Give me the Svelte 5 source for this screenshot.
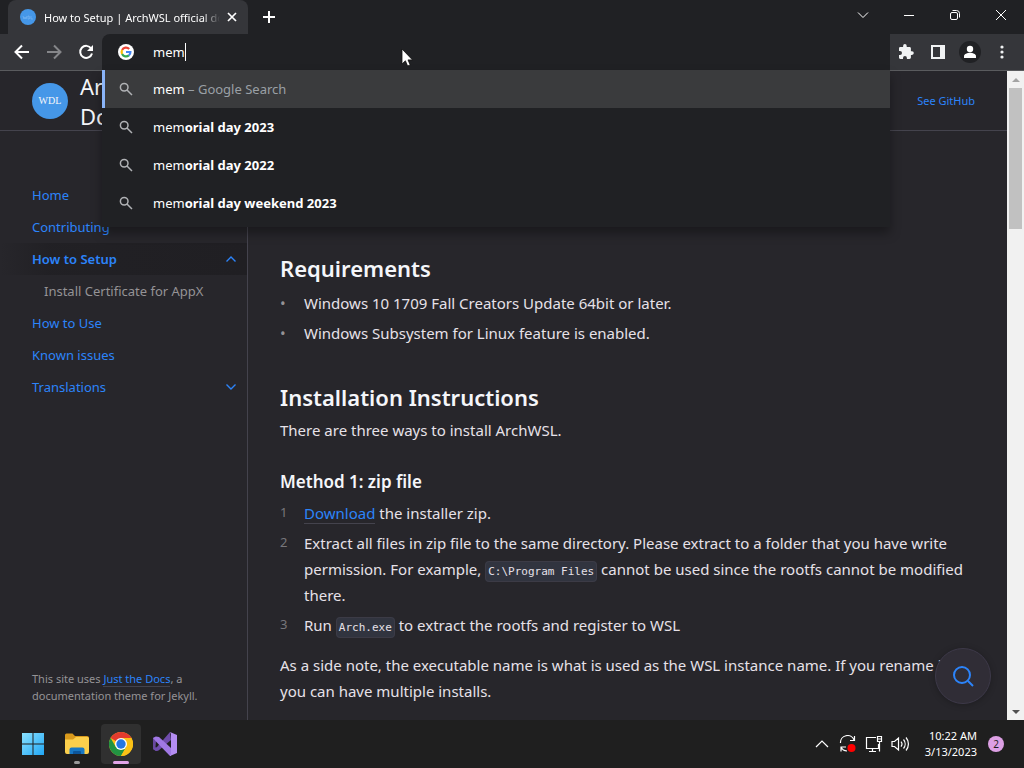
<script lang="ts">
	let query = 'mem';

	const suggestions = [
		{ typed: 'mem', rest: '', hint: ' – Google Search' },
		{ typed: 'mem', rest: 'orial day 2023', hint: '' },
		{ typed: 'mem', rest: 'orial day 2022', hint: '' },
		{ typed: 'mem', rest: 'orial day weekend 2023', hint: '' }
	];

	const nav = [
		{ name: 'Home' },
		{ name: 'Contributing' },
		{ name: 'How to Setup', active: true, children: ['Install Certificate for AppX'] },
		{ name: 'How to Use' },
		{ name: 'Known issues' },
		{ name: 'Translations', closed: true }
	];
</script>

<div class="desktop">
	<header class="titlebar">
		<div class="tab">
			<svg class="favicon" viewBox="0 0 16 16" aria-hidden="true">
				<circle cx="8" cy="8" r="8" fill="#4597e8" />
				<path d="M3 7l1 3 1-2 1 2 1-3M8 7v3h1l1-1-1-2zM11 7v3h2" fill="none" stroke="#80bbf5" stroke-width="0.6" />
			</svg>
			<span class="tab-title">How to Setup | ArchWSL official documentation</span>
			<button class="tab-close" aria-label="Close tab">
				<svg width="10" height="10" viewBox="0 0 10 10"><path d="M1 1l8 8M9 1l-8 8" stroke="#fff" stroke-width="1.7" /></svg>
			</button>
		</div>
		<button class="new-tab" aria-label="New tab">
			<svg width="14" height="14" viewBox="0 0 14 14"><path d="M7 1v12M1 7h12" stroke="#fff" stroke-width="2" /></svg>
		</button>
		<div class="window-buttons">
			<button aria-label="Search tabs">
				<svg width="12" height="12" viewBox="0 0 12 12"><path d="M1 3.5l5 5 5-5" /></svg>
			</button>
			<button aria-label="Minimize">
				<svg width="12" height="12" viewBox="0 0 12 12"><path d="M1 6.5h10" /></svg>
			</button>
			<button aria-label="Restore">
				<svg width="12" height="12" viewBox="0 0 12 12"><rect x="1.5" y="3.5" width="7" height="7" rx="1.5" /><path d="M3.5 1.5h4a3 3 0 0 1 3 3v4" /></svg>
			</button>
			<button aria-label="Close">
				<svg width="12" height="12" viewBox="0 0 12 12"><path d="M1 1l10 10M11 1L1 11" /></svg>
			</button>
		</div>
	</header>

	<div class="toolbar">
		<div class="history">
			<button aria-label="Back">
				<svg width="16" height="16" viewBox="0 0 16 16"><path d="M15 8H2M8 1.5L1.5 8 8 14.5" /></svg>
			</button>
			<button aria-label="Forward" disabled>
				<svg width="16" height="16" viewBox="0 0 16 16"><path d="M1 8h13M8 1.5L14.5 8 8 14.5" /></svg>
			</button>
			<button aria-label="Reload">
				<svg width="16" height="16" viewBox="0 0 16 16"><path d="M13.2 4.5A6 6 0 1 0 14 9.5" /><path d="M15 1v6H9z" fill="#fff" stroke="none" /></svg>
			</button>
		</div>
		<div class="omnibox">
			<svg class="google" viewBox="0 0 16 16" aria-hidden="true">
				<circle cx="8" cy="8" r="8" fill="#fff" />
				<g fill="none" stroke-width="2.2">
					<path d="M11.2 4.9A4.4 4.4 0 0 0 4.1 6" stroke="#ea4335" />
					<path d="M4.1 6a4.4 4.4 0 0 0 0 4" stroke="#fbbc05" />
					<path d="M4.1 10a4.4 4.4 0 0 0 6.8 1.4" stroke="#34a853" />
					<path d="M10.9 11.4A4.4 4.4 0 0 0 12.4 8H8" stroke="#4285f4" />
				</g>
			</svg>
			<div class="field">
				<input aria-label="Address and search bar" bind:value={query} size="2" />
				<span class="caret"></span>
			</div>
			<svg class="pointer" width="12" height="19" viewBox="0 0 12 19" aria-hidden="true">
				<path d="M1 1v15l3.4-3.2L6.6 18l2.6-1.1L7 11.9h4.5z" fill="#fff" stroke="#111" stroke-width="0.8" />
			</svg>
			<div class="suggestions">
				{#each suggestions as item, i}
					<button class="suggestion" class:selected={i === 0}>
						<svg width="14" height="14" viewBox="0 0 14 14"><circle cx="5.2" cy="5.2" r="3.8" /><path d="M8 8l5 5" /></svg>
						<span>{item.typed}<b>{item.rest}</b><i>{item.hint}</i></span>
					</button>
				{/each}
			</div>
		</div>
		<div class="extensions">
			<button aria-label="Extensions">
				<svg width="16" height="16" viewBox="0 0 16 16"><path d="M14 7.3h-1.1V4.400c0-.8-.6-1.4-1.4-1.4H8.7V1.9a1.8 1.8 0 0 0-3.6 0V3H2.3C1.5 3 1 3.6 1 4.4V7h1a2 2 0 0 1 0 4H1v2.6c0 .8.5 1.4 1.3 1.4H5v-1.1a1.9 1.9 0 0 1 3.9 0V15h2.6c.8 0 1.4-.6 1.4-1.4v-2.7H14a1.8 1.8 0 0 0 0-3.6z" fill="#f1f3f4" /></svg>
			</button>
			<button aria-label="Side panel">
				<svg width="16" height="16" viewBox="0 0 16 16"><path d="M1 1h14v14H1zM3 3v10h7V3z" fill="#f1f3f4" fill-rule="evenodd" /></svg>
			</button>
			<button aria-label="Profile">
				<svg width="22" height="22" viewBox="0 0 22 22"><circle cx="11" cy="11" r="11" fill="#202124" /><circle cx="11" cy="8" r="3.2" fill="#fff" /><path d="M5 17v-1.8c0-2.2 3.5-3.4 6-3.4s6 1.2 6 3.4V17z" fill="#fff" /></svg>
			</button>
			<button aria-label="Menu">
				<svg width="4" height="16" viewBox="0 0 4 16"><circle cx="2" cy="3" r="1.6" fill="#f1f3f4" /><circle cx="2" cy="8" r="1.6" fill="#f1f3f4" /><circle cx="2" cy="13" r="1.6" fill="#f1f3f4" /></svg>
			</button>
		</div>
	</div>

	<div class="page">
		<aside class="sidebar">
			<a class="site" href="#home">
				<span class="logo">WDL</span>
				<span class="site-title">ArchWSL<br />Document</span>
			</a>
			<nav>
				{#each nav as item}
					<div class="nav-item" class:active={item.active}>
						<a href="#{item.name}">{item.name}</a>
						{#if item.active || item.closed}
							<button aria-label="Toggle {item.name}">
								<svg width="10" height="6" viewBox="0 0 10 6"><path d={item.active ? 'M.5 5.5L5 1l4.5 4.5' : 'M.5 .5L5 5 9.5 .5'} /></svg>
							</button>
						{/if}
					</div>
					{#each item.children ?? [] as child}
						<div class="nav-item child"><a href="#{child}">{child}</a></div>
					{/each}
				{/each}
			</nav>
			<footer>This site uses <a href="#docs">Just the Docs</a>, a documentation theme for Jekyll.</footer>
		</aside>

		<div class="main">
			<div class="main-header"><a href="#github">See GitHub</a></div>
			<main>
				<h2>Requirements</h2>
				<ul>
					<li>Windows 10 1709 Fall Creators Update 64bit or later.</li>
					<li>Windows Subsystem for Linux feature is enabled.</li>
				</ul>
				<h2>Installation Instructions</h2>
				<p>There are three ways to install ArchWSL.</p>
				<h3>Method 1: zip file</h3>
				<ol>
					<li><a href="#download">Download</a> the installer zip.</li>
					<li>
						Extract all files in zip file to the same directory. Please extract to a folder that you have write
						permission. For example, <code>C:\Program Files</code> cannot be used since the rootfs cannot be modified there.
					</li>
					<li>Run <code>Arch.exe</code> to extract the rootfs and register to WSL</li>
				</ol>
				<p class="note">
					As a side note, the executable name is what is used as the WSL instance name. If you rename it
					you&nbsp;can have multiple installs.
				</p>
			</main>
			<button class="search" aria-label="Search">
				<svg width="22" height="22" viewBox="0 0 22 22"><circle cx="10" cy="10" r="8" /><path d="M16 16l5 5" /></svg>
			</button>
		</div>

		<div class="scrollbar">
			<button aria-label="Scroll up"><svg width="8" height="4" viewBox="0 0 8 4"><path d="M0 4l4-4 4 4z" fill="#a3a3a3" /></svg></button>
			<div class="track"><div class="thumb"></div></div>
			<button aria-label="Scroll down"><svg width="8" height="4" viewBox="0 0 8 4"><path d="M0 0l4 4 4-4z" fill="#505050" /></svg></button>
		</div>
	</div>

	<footer class="taskbar">
		<div class="apps">
			<button aria-label="Start">
				<svg width="24" height="24" viewBox="0 0 24 24">
					<defs>
						<linearGradient id="win" x1="0" y1="0" x2="24" y2="24" gradientUnits="userSpaceOnUse"><stop stop-color="#8fe4ff" /><stop offset="1" stop-color="#1ca4f4" /></linearGradient>
					</defs>
					<path d="M1 1h10.5v10.5H1zM12.5 1H23v10.5H12.5zM1 12.5h10.5V23H1zM12.5 12.5H23V23H12.5z" fill="url(#win)" />
				</svg>
			</button>
			<button class="running" aria-label="File Explorer">
				<svg width="26" height="24" viewBox="0 0 26 24">
					<path d="M1 3q0-1.5 1.5-1.5h6L11 4h12q2 0 2 2v5H1z" fill="#d99a1c" />
					<path d="M1 7.5h8L12 5h11.5q1.5 0 1.5 1.5V20q0 2-2 2H3q-2 0-2-2z" fill="#fbcf4c" />
					<path d="M5.5 22v-4.5q0-2 2-2h11q2 0 2 2V22z" fill="#1878c4" />
					<path d="M9 22v-2q0-1 1-1h6q1 0 1 1v2z" fill="#0c559a" />
				</svg>
			</button>
			<button class="running current" aria-label="Google Chrome">
				<svg width="24" height="24" viewBox="0 0 24 24">
					<circle cx="12" cy="12" r="12" fill="#fbc116" />
					<path d="M12 12L1.6 6A12 12 0 0 1 22.4 6z" fill="#e33b2e" />
					<path d="M1.6 6A12 12 0 0 0 12 24l5.2-9L12 12 6.8 15z" fill="#229342" />
					<path d="M12 6h10.4A12 12 0 0 1 12 24l5.2-9z" fill="#fbc116" />
					<circle cx="12" cy="12" r="6" fill="#fff" />
					<circle cx="12" cy="12" r="4.7" fill="#2477e4" />
				</svg>
			</button>
			<button aria-label="Visual Studio">
				<svg width="24" height="24" viewBox="0 0 24 24">
					<path d="M0 6l3-1.5V9l-.5 6 2.500 3.500L3 19l-3-2z" fill="#69489f" />
					<path d="M17 0l1 8L5.500 18.500 3 19l-3-2 4-2z" fill="#6f4cab" />
					<path d="M0 6l3-1.500 3 .5L18 16v8h-1L2.500 9z" fill="#a078e4" />
					<path d="M17 0l7 3v18l-7 3 1-2V2z" fill="#b48df2" />
				</svg>
			</button>
		</div>
		<div class="tray">
			<button aria-label="Hidden icons"><svg width="14" height="8" viewBox="0 0 14 8"><path d="M1 7l6-6 6 6" /></svg></button>
			<button aria-label="Updates">
				<svg width="18" height="18" viewBox="0 0 18 18">
					<path d="M1.5 8A7 7 0 0 1 15 5M15.5 1v4.5H11M2 16.5V12h5M2 12a7 7 0 0 0 6 4" />
					<circle cx="12.5" cy="13" r="4" fill="#f00" stroke="none" />
				</svg>
			</button>
			<button aria-label="Network">
				<svg width="18" height="18" viewBox="0 0 18 18"><path d="M11 2.5H1.5v11h12V9M7.5 13.5v3M4 16.5h7M12.5 1.5h4v5h-4zM14.5 6.5v10M12.5 4h4" /></svg>
			</button>
			<button aria-label="Volume">
				<svg width="18" height="16" viewBox="0 0 18 16"><path d="M1 5.5h2.5L7.5 2v12l-4-3.5H1zM10 5.500a4 4 0 0 1 0 5M12.5 3.5a7 7 0 0 1 0 9M15 1.5a10 10 0 0 1 0 13" /></svg>
			</button>
			<div class="clock"><time>10:22 AM</time><time>3/13/2023</time></div>
			<span class="badge">2</span>
		</div>
	</footer>
</div>

<style>
	:global(body) {
		margin: 0;
		background: #27262b;
	}
	.desktop {
		min-height: 100vh;
		display: flex;
		flex-direction: column;
		font-family: 'Segoe UI', 'Noto Sans', 'Open Sans', sans-serif;
		color: #e6e1e8;
	}
	button {
		display: flex;
		align-items: center;
		justify-content: center;
		padding: 0;
		border: none;
		background: none;
		font: inherit;
		color: inherit;
	}
	a {
		color: #2c84fa;
		text-decoration: none;
	}

	.titlebar {
		display: flex;
		height: 34px;
		padding-left: 8px;
		background: #202124;
	}
	.tab {
		display: flex;
		align-items: center;
		box-sizing: border-box;
		width: 240px;
		padding: 0 10px 0 12px;
		border-radius: 8px 8px 0 0;
		background: #35363a;
		font-size: 11px;
		color: #fff;
	}
	.favicon {
		width: 16px;
		height: 16px;
		margin-right: 8px;
	}
	.tab-title {
		flex: 1;
		overflow: hidden;
		white-space: nowrap;
		mask-image: linear-gradient(to right, #000 90%, transparent);
	}
	.tab-close {
		width: 12px;
		margin-left: 6px;
	}
	.new-tab {
		width: 42px;
	}
	.window-buttons {
		display: flex;
		align-items: center;
		margin-left: auto;
		padding-bottom: 5px;
	}
	.window-buttons button {
		width: 46px;
	}
	.window-buttons svg {
		fill: none;
		stroke: #fff;
	}

	.toolbar {
		display: flex;
		height: 36px;
		background: #35363a;
		border-bottom: 1px solid #5a5b5e;
	}
	.history {
		display: flex;
		padding: 0 0 0 6px;
		width: 96px;
	}
	.history button {
		width: 32px;
	}
	.history svg {
		fill: none;
		stroke: #fff;
		stroke-width: 2;
	}
	.history button:disabled svg {
		stroke: #858689;
	}
	.omnibox {
		position: relative;
		z-index: 2;
		flex: 1;
		display: flex;
		align-items: center;
		padding-left: 16px;
		border-radius: 8px 0 0 0;
		background: #202124;
		font-size: 13px;
	}
	.google {
		width: 16px;
		height: 16px;
		margin-right: 19px;
	}
	.field {
		position: relative;
		flex: 1;
		display: flex;
	}
	input {
		width: 100%;
		padding: 0;
		border: none;
		outline: none;
		background: none;
		font: inherit;
		color: #fff;
	}
	.caret {
		position: absolute;
		left: 32px;
		top: 0;
		width: 1px;
		height: 18px;
		background: #fff;
	}
	.pointer {
		position: absolute;
		left: 299px;
		top: 14px;
	}
	.suggestions {
		position: absolute;
		top: 100%;
		left: 0;
		right: 0;
		padding-bottom: 5px;
		background: #202124;
		box-shadow: 0 6px 10px rgba(0, 0, 0, 0.35);
	}
	.suggestion {
		width: 100%;
		height: 38px;
		justify-content: flex-start;
		padding-left: 14px;
		border-left: 3px solid transparent;
		color: #fff;
	}
	.suggestion.selected {
		background: #3a3b3d;
		border-left-color: #8ab4f8;
	}
	.suggestion svg {
		margin-right: 20px;
		fill: none;
		stroke: #b0b2b5;
		stroke-width: 1.5;
	}
	.suggestion span {
		white-space: pre;
	}
	.suggestion i {
		font-style: normal;
		color: #9aa0a6;
	}
	.extensions {
		display: flex;
		width: 134px;
	}
	.extensions button {
		width: 32px;
	}

	.page {
		flex: 1;
		display: flex;
		background: #27262b;
	}
	.sidebar {
		display: flex;
		flex-direction: column;
		width: 247px;
		border-right: 1px solid #44434d;
		font-size: 13px;
	}
	.site {
		display: flex;
		align-items: center;
		height: 59px;
		padding-left: 32px;
		border-bottom: 1px solid #44434d;
		color: #f5f6fa;
	}
	.logo {
		width: 36px;
		height: 36px;
		margin-right: 12px;
		border-radius: 50%;
		background: #4597e8;
		font: 10px/36px 'Liberation Serif', serif;
		text-align: center;
	}
	.site-title {
		font-size: 22px;
		line-height: 30px;
	}
	nav {
		padding-top: 48px;
	}
	.nav-item {
		display: flex;
		align-items: center;
		height: 32px;
		padding-left: 32px;
	}
	.nav-item a {
		flex: 1;
	}
	.nav-item.active {
		background: linear-gradient(-90deg, #201f23, rgba(32, 31, 35, 0.8) 80%, rgba(32, 31, 35, 0));
		font-weight: 600;
	}
	.nav-item.child {
		padding-left: 44px;
	}
	.nav-item.child a {
		color: #959396;
	}
	.nav-item button {
		width: 32px;
		height: 32px;
	}
	.nav-item svg {
		fill: none;
		stroke: #2c84fa;
		stroke-width: 1.4;
	}
	.sidebar footer {
		margin-top: auto;
		padding: 16px 32px;
		font-size: 11px;
		line-height: 17px;
		color: #959396;
	}
	footer a,
	main a {
		border-bottom: 1px solid #44434d;
	}

	.main {
		position: relative;
		flex: 1;
		min-width: 0;
	}
	.main-header {
		display: flex;
		align-items: center;
		justify-content: flex-end;
		height: 59px;
		padding-right: 32px;
		border-bottom: 1px solid #44434d;
		font-size: 11px;
	}
	main {
		padding: 121px 32px 16px;
		font-size: 15px;
		line-height: 26px;
	}
	h2,
	h3 {
		margin: 0;
		font-weight: 600;
		color: #f5f6fa;
	}
	h2 {
		margin-bottom: 4px;
		font-size: 22px;
		line-height: 32px;
	}
	h3 {
		margin: 27px 0 6px;
		font-size: 17px;
		line-height: 24px;
	}
	p {
		margin: 0;
	}
	.note {
		margin-top: 14px;
	}
	ul,
	ol {
		margin: 0;
		padding-left: 24px;
		list-style: none;
		counter-reset: step;
	}
	ul {
		margin: 6px 0 35px;
	}
	li {
		position: relative;
	}
	li + li {
		margin-top: 4px;
	}
	li::before {
		position: absolute;
		left: -24px;
		color: #77767b;
	}
	ul li::before {
		content: '•';
		color: #959396;
	}
	ol li::before {
		counter-increment: step;
		content: counter(step);
		font-size: 13px;
		line-height: 24px;
	}
	code {
		padding: 3px 2px;
		border: 1px solid #3c3b46;
		border-radius: 4px;
		background: #31343f;
		font: 11px 'DejaVu Sans Mono', monospace;
	}
	.search {
		position: absolute;
		right: 16px;
		bottom: 16px;
		width: 56px;
		height: 56px;
		border: 1px solid #3d3949;
		border-radius: 50%;
		background: #302d36;
		box-shadow: 0 1px 6px rgba(0, 0, 0, 0.25);
	}
	.search svg {
		fill: none;
		stroke: #2c84fa;
		stroke-width: 2;
	}

	.scrollbar {
		display: flex;
		flex-direction: column;
		width: 17px;
		background: #f1f1f1;
	}
	.scrollbar button {
		height: 17px;
	}
	.track {
		flex: 1;
		padding: 0 2px;
	}
	.thumb {
		height: 23%;
		background: #c1c1c1;
	}

	.taskbar {
		display: flex;
		justify-content: space-between;
		height: 48px;
		background: #1f1f1f;
		color: #fff;
	}
	.apps {
		display: flex;
		align-items: center;
		gap: 4px;
		padding-left: 13px;
	}
	.apps button {
		position: relative;
		width: 40px;
		height: 40px;
		border-radius: 4px;
	}
	.apps .current {
		background: #303030;
	}
	.running::after {
		content: '';
		position: absolute;
		bottom: 0;
		width: 6px;
		height: 3px;
		border-radius: 2px;
		background: #9a9a9a;
	}
	.current::after {
		width: 16px;
		background: #e2a5e8;
	}
	.tray {
		display: flex;
		align-items: center;
		padding-right: 20px;
	}
	.tray button {
		width: 26px;
	}
	.tray svg {
		fill: none;
		stroke: #fff;
		stroke-width: 1.2;
	}
	.clock {
		display: flex;
		flex-direction: column;
		margin: 0 11px 0 12px;
		font-size: 11px;
		line-height: 16px;
		text-align: right;
	}
	.badge {
		width: 16px;
		height: 16px;
		border-radius: 50%;
		background: #dda0e4;
		font-size: 10px;
		line-height: 16px;
		text-align: center;
		color: #1f1f1f;
	}
</style>
